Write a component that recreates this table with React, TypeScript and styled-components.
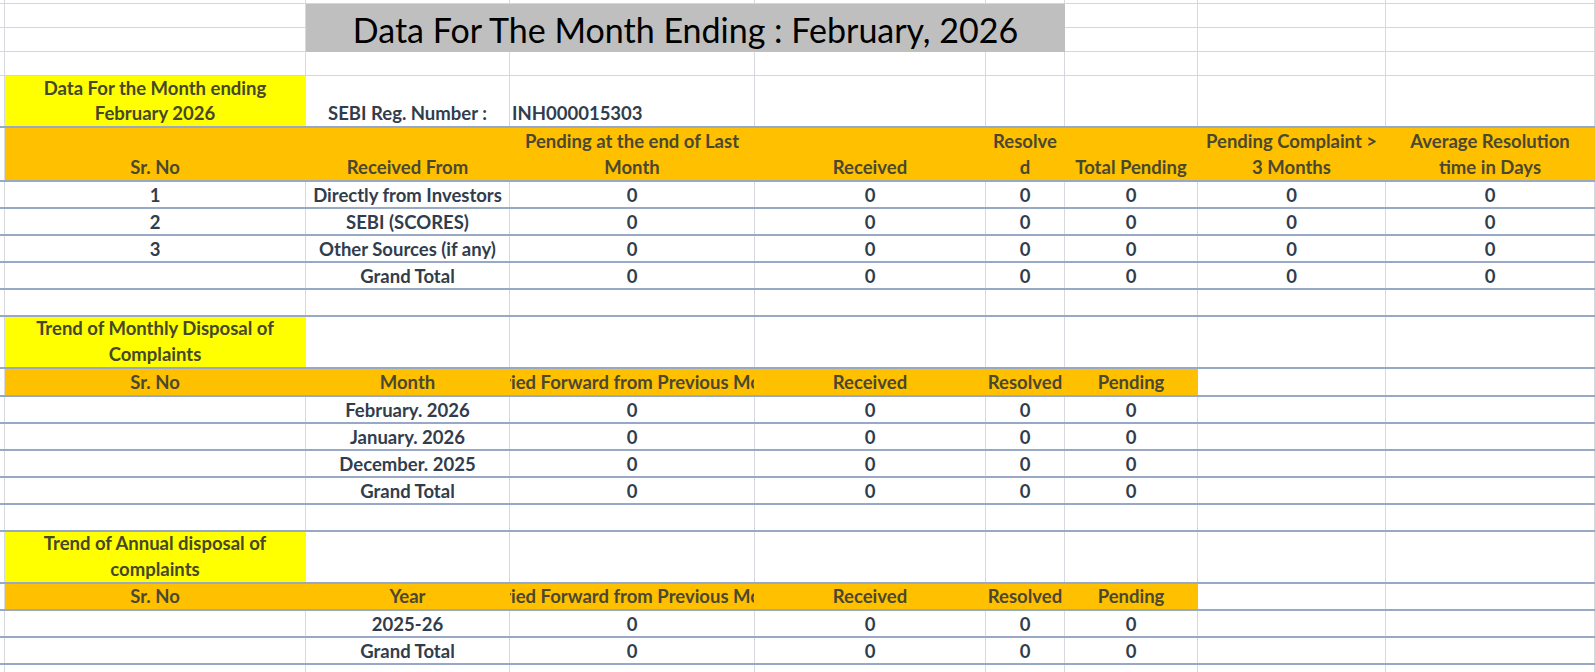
import React from 'react';
import styled, { createGlobalStyle } from 'styled-components';

const GlobalStyle = createGlobalStyle`
  html, body {
    margin: 0;
    padding: 0;
    background: #ffffff;
  }
  body {
    font-family: Lato, 'Liberation Sans', sans-serif;
    overflow: hidden;
  }
`;

// gutter + sheet columns A..H
const COLS = '5px 301px 204px 245px 231px 79px 133px 188px 1fr';

type Fill = 'orange' | 'yellow' | 'gray';

const FILLS: Record<Fill, string> = {
  orange: '#ffc000',
  yellow: '#ffff00',
  gray: '#bfbfbf',
};

const INK: Record<Fill | 'plain', string> = {
  plain: '#313d4d',
  orange: '#4b4832',
  yellow: '#45482b',
  gray: '#000000',
};

const Sheet = styled.div`
  width: 1595px;
  height: 672px;
  overflow: hidden;
`;

const Row = styled.div<{ $h: number; $thick?: boolean }>`
  display: grid;
  grid-template-columns: ${COLS};
  height: ${(p) => p.$h}px;
  box-sizing: border-box;
  border-bottom: ${(p) => (p.$thick ? '2px solid #97a9c4' : '1px solid #d6d6d6')};
`;

const TitleBand = styled.div`
  display: grid;
  grid-template-columns: ${COLS};
  grid-template-rows: 24px 24px;
`;

const Cell = styled.div<{ $fill?: Fill; $align?: 'left' | 'center'; $lh?: number }>`
  display: flex;
  flex-direction: column;
  justify-content: flex-end;
  align-items: ${(p) => (p.$align === 'left' ? 'flex-start' : 'center')};
  min-width: 0;
  overflow: hidden;
  box-sizing: border-box;
  padding: 0 2px;
  border-right: 1px solid ${(p) => (p.$fill ? FILLS[p.$fill] : '#d6d9de')};
  background: ${(p) => (p.$fill ? FILLS[p.$fill] : 'transparent')};
  color: ${(p) => INK[p.$fill ?? 'plain']};
  font-size: 18.5px;
  font-weight: 700;
  line-height: ${(p) => p.$lh ?? 24}px;
  white-space: nowrap;
`;

const BandCell = styled.div`
  box-sizing: border-box;
  border-right: 1px solid #d6d9de;
  border-bottom: 1px solid #d6d6d6;
`;

const Title = styled.div`
  grid-column: 3 / 7;
  grid-row: 1 / 3;
  display: flex;
  align-items: flex-end;
  justify-content: center;
  background: ${FILLS.gray};
  color: #000000;
  font-size: 34px;
  font-weight: 400;
  line-height: 44px;
  white-space: nowrap;
`;

const Line = styled.span`
  display: block;
`;

type Col = { text?: string | string[]; fill?: Fill; align?: 'left' | 'center'; lh?: number };

const cells = (cols: Col[]) =>
  [{} as Col, ...cols].map((c, i) => (
    <Cell key={i} $fill={c.fill} $align={c.align} $lh={c.lh}>
      {([] as string[]).concat(c.text ?? []).map((t, j) => (
        <Line key={j}>{t}</Line>
      ))}
    </Cell>
  ));

const blank = (n: number): Col[] => Array.from({ length: n }, () => ({}));

const head1: Col[] = [
  { text: 'Sr. No' },
  { text: 'Received From' },
  { text: ['Pending at the end of Last', 'Month'] },
  { text: 'Received' },
  { text: ['Resolve', 'd'] },
  { text: 'Total Pending' },
  { text: ['Pending Complaint >', '3 Months'] },
  { text: ['Average Resolution', 'time in Days'] },
].map((c) => ({ ...c, fill: 'orange' as Fill, lh: 26 }));

const trendHead = (label: string): Col[] => [
  ...['Sr. No', label, 'Carried Forward from Previous Month', 'Received', 'Resolved', 'Pending'].map(
    (t) => ({ text: t, fill: 'orange' as Fill, lh: 26 })
  ),
  {},
  {},
];

const sources = [
  ['1', 'Directly from Investors'],
  ['2', 'SEBI (SCORES)'],
  ['3', 'Other Sources (if any)'],
  ['', 'Grand Total'],
];

const months = ['February. 2026', 'January. 2026', 'December. 2025', 'Grand Total'];
const years = ['2025-26', 'Grand Total'];

const zeros = (n: number): Col[] => Array.from({ length: n }, () => ({ text: '0' }));

const App = () => {
  return (
    <>
      <GlobalStyle />
      <Sheet>
        <Row $h={4}>{cells(blank(8))}</Row>
        <TitleBand>
          <Title>Data For The Month Ending : February, 2026</Title>
          {Array.from({ length: 10 }, (_, i) => (
            <BandCell key={i} />
          ))}
        </TitleBand>
        <Row $h={24}>{cells(blank(8))}</Row>
        <Row $h={52} $thick>
          {cells([
            { text: ['Data For the Month ending', 'February 2026'], fill: 'yellow', lh: 25 },
            { text: 'SEBI Reg. Number :', lh: 25 },
            { text: 'INH000015303', align: 'left', lh: 25 },
            ...blank(5),
          ])}
        </Row>
        <Row $h={54} $thick>
          {cells(head1)}
        </Row>
        {sources.map(([no, from]) => (
          <Row key={from} $h={27} $thick>
            {cells([{ text: no }, { text: from }, ...zeros(6)])}
          </Row>
        ))}
        <Row $h={27} $thick>{cells(blank(8))}</Row>

        <Row $h={52} $thick>
          {cells([{ text: ['Trend of Monthly Disposal of', 'Complaints'], fill: 'yellow', lh: 26 }, ...blank(7)])}
        </Row>
        <Row $h={28} $thick>
          {cells(trendHead('Month'))}
        </Row>
        {months.map((m) => (
          <Row key={m} $h={27} $thick>
            {cells([{}, { text: m }, ...zeros(4), {}, {}])}
          </Row>
        ))}
        <Row $h={27} $thick>{cells(blank(8))}</Row>

        <Row $h={52} $thick>
          {cells([{ text: ['Trend of Annual disposal of', 'complaints'], fill: 'yellow', lh: 26 }, ...blank(7)])}
        </Row>
        <Row $h={27} $thick>
          {cells(trendHead('Year'))}
        </Row>
        {years.map((y) => (
          <Row key={y} $h={27} $thick>
            {cells([{}, { text: y }, ...zeros(4), {}, {}])}
          </Row>
        ))}
        <Row $h={27} $thick>{cells(blank(8))}</Row>
      </Sheet>
    </>
  );
};

export default App;
